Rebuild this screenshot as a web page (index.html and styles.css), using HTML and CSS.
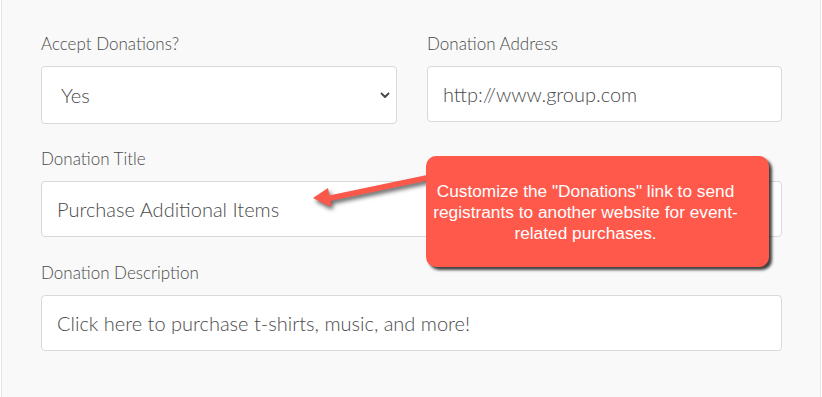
FILE: index.html
```html
<!DOCTYPE html>
<html lang="en">
<head>
<meta charset="utf-8">
<title>Donations</title>
<link rel="stylesheet" href="styles.css">
</head>
<body>
<div class="panel">
  <form class="form">
    <div class="row two">
      <div class="group">
        <label class="label">Accept Donations?</label>
        <div class="select">
          <span class="select-value">Yes</span>
          <svg class="chevron" width="10" height="7" viewBox="0 0 10 7"><path d="M1.5 1.5 L5 5 L8.5 1.5" fill="none" stroke="#444" stroke-width="1.8" stroke-linecap="round" stroke-linejoin="round"/></svg>
        </div>
      </div>
      <div class="group">
        <label class="label">Donation Address</label>
        <div class="input">http://www.group.com</div>
      </div>
    </div>
    <div class="row">
      <div class="group">
        <label class="label">Donation Title</label>
        <div class="input">Purchase Additional Items</div>
      </div>
    </div>
    <div class="row">
      <div class="group">
        <label class="label">Donation Description</label>
        <div class="input">Click here to purchase t-shirts, music, and more!</div>
      </div>
    </div>
  </form>

  <svg class="arrow" width="140" height="50" viewBox="0 0 140 50">
    <line x1="135" y1="20" x2="25" y2="43" stroke="#f9584b" stroke-width="5.5" stroke-linecap="butt"/>
    <polygon points="12,42 27,32 31,52" fill="#f9584b"/>
  </svg>

  <div class="callout">Customize the "Donations" link to send registrants to another website for event-related purchases.</div>
</div>
</body>
</html>
```

FILE: styles.css
```css
html, body {
  margin: 0;
  padding: 0;
  background: #ffffff;
}

body {
  width: 822px;
  height: 397px;
  overflow: hidden;
  font-family: Lato, "Open Sans", sans-serif;
}

.panel {
  position: relative;
  margin-left: 1px;
  width: 818px;
  height: 397px;
  background: #f9f9f9;
  border-left: 1px solid #e4e4e4;
  border-right: 1px solid #e4e4e4;
}

.form {
  padding: 33px 38px 0 39px;
}

.row {
  margin-bottom: 25px;
}

.row.two {
  display: grid;
  grid-template-columns: 356px 355px;
  column-gap: 30px;
  align-items: start;
  margin-bottom: 24px;
}

.label {
  display: block;
  font-size: 17px;
  font-weight: 300;
  line-height: 22px;
  color: #4a4a4a;
  margin-bottom: 11px;
}

.input,
.select {
  box-sizing: border-box;
  height: 56px;
  background: #ffffff;
  border: 1px solid #d9d9d9;
  border-radius: 4px;
  padding: 0 15px;
  font-size: 20px;
  font-weight: 300;
  color: #4a4a4a;
  display: flex;
  align-items: center;
}

.select {
  height: 58px;
  padding-left: 19px;
  justify-content: space-between;
  padding-right: 6px;
}

.chevron {
  display: block;
}

.callout {
  position: absolute;
  left: 424px;
  top: 156px;
  width: 343px;
  height: 111px;
  box-sizing: border-box;
  padding: 25px 28px 0 4px;
  background: #ff594b;
  border-radius: 10px;
  box-shadow: 3px 3px 3px rgba(0, 0, 0, 0.75);
  color: #ffffff;
  font-family: "Liberation Sans", Arial, sans-serif;
  font-size: 17.3px;
  line-height: 21px;
  text-align: center;
}

.arrow {
  position: absolute;
  left: 299px;
  top: 156px;
  filter: drop-shadow(2px 3px 2px rgba(0, 0, 0, 0.6));
}
```
